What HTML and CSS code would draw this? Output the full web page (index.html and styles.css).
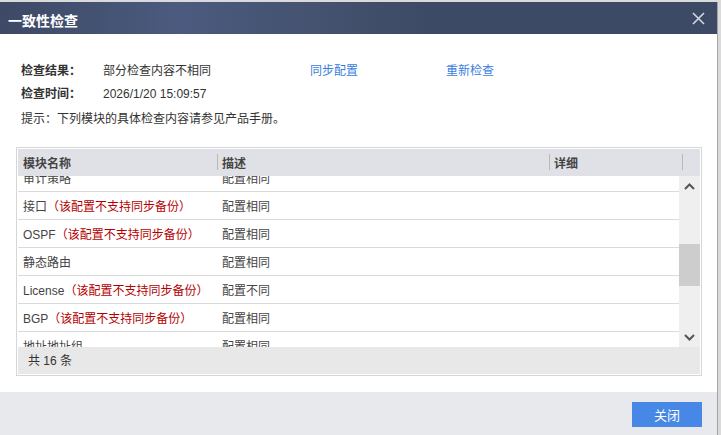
FILE: index.html
```html
<!DOCTYPE html>
<html lang="zh-CN">
<head>
    <meta charset="UTF-8">
    <title>一致性检查</title>
    <link rel="stylesheet" href="styles.css">
</head>
<body>
    <div class="dialog">
        <div class="dlg-head">
            <span class="dlg-title">一致性检查</span>
            <button class="dlg-close" title="关闭">
                <svg width="13" height="13" viewBox="0 0 13 13">
                    <path d="M1 1 L12 12 M12 1 L1 12" stroke="#d3d7df" stroke-width="1.6" fill="none"/>
                </svg>
            </button>
        </div>

        <div class="dlg-body">
            <div class="info-row row-result">
                <span class="label">检查结果：</span>
                <span class="value">部分检查内容不相同</span>
                <a href="#" class="link link-sync">同步配置</a>
                <a href="#" class="link">重新检查</a>
            </div>
            <div class="info-row row-time">
                <span class="label">检查时间：</span>
                <span class="value">2026/1/20 15:09:57</span>
            </div>
            <div class="info-row">
                <span class="tip">提示：下列模块的具体检查内容请参见产品手册。</span>
            </div>

            <div class="grid">
                <div class="grid-head">
                    <div class="hcell col-name">模块名称</div>
                    <div class="hcell col-desc sep">描述</div>
                    <div class="hcell col-detail sep">详细</div>
                    <div class="hcell col-pad sep"></div>
                </div>

                <div class="grid-main">
                    <div class="grid-rows">
                        <div class="grow first">
                            <div class="cell col-name">审计策略</div>
                            <div class="cell col-desc">配置相同</div>
                            <div class="cell col-detail"></div>
                        </div>
                        <div class="grow">
                            <div class="cell col-name">接口<span class="warn">（该配置不支持同步备份）</span></div>
                            <div class="cell col-desc">配置相同</div>
                            <div class="cell col-detail"></div>
                        </div>
                        <div class="grow">
                            <div class="cell col-name">OSPF<span class="warn">（该配置不支持同步备份）</span></div>
                            <div class="cell col-desc">配置相同</div>
                            <div class="cell col-detail"></div>
                        </div>
                        <div class="grow">
                            <div class="cell col-name">静态路由</div>
                            <div class="cell col-desc">配置相同</div>
                            <div class="cell col-detail"></div>
                        </div>
                        <div class="grow">
                            <div class="cell col-name">License<span class="warn">（该配置不支持同步备份）</span></div>
                            <div class="cell col-desc">配置不同</div>
                            <div class="cell col-detail"></div>
                        </div>
                        <div class="grow">
                            <div class="cell col-name">BGP<span class="warn">（该配置不支持同步备份）</span></div>
                            <div class="cell col-desc">配置相同</div>
                            <div class="cell col-detail"></div>
                        </div>
                        <div class="grow">
                            <div class="cell col-name">地址地址组</div>
                            <div class="cell col-desc">配置相同</div>
                            <div class="cell col-detail"></div>
                        </div>
                    </div>

                    <!-- scrollbar of the list -->
                    <div class="vscroll">
                        <div class="vs-btn">
                            <svg width="11" height="7" viewBox="0 0 11 7"><polyline points="1,6 5.5,1.5 10,6" stroke="#555" stroke-width="2" fill="none"/></svg>
                        </div>
                        <div class="vs-track">
                            <div class="vs-thumb"></div>
                        </div>
                        <div class="vs-btn">
                            <svg width="11" height="7" viewBox="0 0 11 7"><polyline points="1,1 5.5,5.5 10,1" stroke="#555" stroke-width="2" fill="none"/></svg>
                        </div>
                    </div>
                </div>

                <div class="grid-foot">共 16 条</div>
            </div>
        </div>

        <div class="dlg-foot">
            <button class="btn-primary">关闭</button>
        </div>
    </div>
</body>
</html>
```

FILE: styles.css
```css
body {
    margin: 0;
    background: #dadada;
    font-family: "Liberation Sans", "Noto Sans CJK SC", sans-serif;
    font-size: 12px;
    color: #333;
}

.dialog {
    width: 717px;
    height: 433px;
    margin-top: 2px;
    border-right: 1px solid #a4a4a4;
    background: #fff;
    display: flex;
    flex-direction: column;
}

.dlg-head {
    height: 32px;
    box-sizing: border-box;
    padding: 0 12px 0 8px;
    display: flex;
    align-items: center;
    justify-content: space-between;
    background: linear-gradient(to right, #3d4965 0%, #4b5a7e 25%, #44526f 45%, #3d4a65 60%, #3d4a65 100%);
}

.dlg-title {
    color: #fff;
    font-size: 14px;
    font-weight: bold;
    padding-top: 4px;
}

.dlg-close {
    width: 13px;
    height: 13px;
    padding: 0;
    border: none;
    background: none;
    cursor: pointer;
    display: flex;
}

.dlg-body {
    flex: 1;
    padding: 26px 15px 0 16px;
}

.info-row {
    height: 20px;
    line-height: 20px;
    padding: 1px 0 0 5px;
    display: flex;
    white-space: nowrap;
}

.row-result {
    margin-bottom: 2px;
}

.row-time {
    margin-bottom: 4px;
}

.label {
    width: 82px;
    font-weight: bold;
}

.value {
    width: 207px;
}

.link {
    width: 136px;
    color: #3a80e0;
    text-decoration: none;
}

.tip {
    color: #333;
}

.grid {
    margin-top: 18px;
    border: 1px solid #d6d6d6;
    padding: 1px;
}

.grid-head {
    height: 27px;
    display: flex;
    background: #e0e1e6;
    font-weight: bold;
    color: #444;
}

.hcell {
    position: relative;
    line-height: 27px;
    padding: 2px 0 0 5px;
    box-sizing: border-box;
}

.hcell.sep::before {
    content: "";
    position: absolute;
    left: 0;
    top: 5px;
    height: 16px;
    border-left: 1px solid #b8b8b8;
}

.col-name {
    width: 199px;
}

.col-desc {
    width: 332px;
}

.col-detail {
    width: 133px;
}

.col-pad {
    flex: 1;
}

.grid-main {
    height: 171px;
    display: flex;
}

.grid-rows {
    flex: 1;
    overflow: hidden;
}

.grow {
    height: 28px;
    box-sizing: border-box;
    border-bottom: 1px solid #dadada;
    display: flex;
    color: #444;
}

.grow.first {
    margin-top: -12px;
}

.cell {
    line-height: 27px;
    padding: 2px 0 0 5px;
    box-sizing: border-box;
    white-space: nowrap;
}

.grow .col-detail {
    flex: 1;
}

.warn {
    color: #b40000;
}

.vscroll {
    width: 21px;
    background: #efefef;
    display: flex;
    flex-direction: column;
}

.vs-btn {
    height: 20px;
    display: flex;
    align-items: center;
    justify-content: center;
}

.vs-track {
    flex: 1;
}

.vs-thumb {
    margin-top: 48px;
    height: 42px;
    background: #cdcdcd;
}

.grid-foot {
    height: 27px;
    line-height: 27px;
    padding: 1px 0 0 10px;
    box-sizing: border-box;
    background: #e8e8e8;
    color: #333;
}

.dlg-foot {
    height: 43px;
    box-sizing: border-box;
    padding: 10px 15px 0 0;
    background: #e8e9ed;
    display: flex;
    justify-content: flex-end;
    align-items: flex-start;
}

.btn-primary {
    width: 70px;
    height: 25px;
    border: none;
    background: #4787e6;
    color: #fff;
    font-family: "Liberation Sans", "Noto Sans CJK SC", sans-serif;
    font-size: 13px;
    cursor: pointer;
}
```
